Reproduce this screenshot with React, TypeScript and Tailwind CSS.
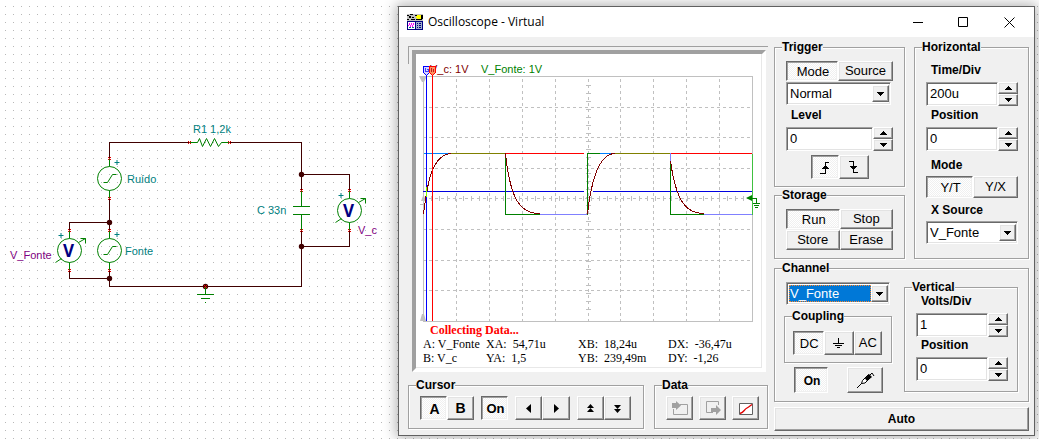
import type { ReactNode } from 'react';

const raised =
  'border border-t-white border-l-white border-r-[#696969] border-b-[#696969] bg-[#f0f0f0] shadow-[inset_-1px_-1px_0_#a0a0a0,inset_1px_1px_0_#e3e3e3]';
const pressed =
  'border border-t-[#696969] border-l-[#696969] border-r-white border-b-white bg-[#f8f8f8] bg-[conic-gradient(#fff_25%,#f0f0f0_0_50%,#fff_0_75%,#f0f0f0_0)] bg-[size:2px_2px] shadow-[inset_1px_1px_0_#a0a0a0,inset_-1px_-1px_0_#f0f0f0]';
const sunken =
  'border border-t-[#a0a0a0] border-l-[#a0a0a0] border-r-white border-b-white bg-white shadow-[inset_1px_1px_0_#696969,inset_-1px_-1px_0_#e3e3e3]';

type BtnProps = { on?: boolean; label?: string; className?: string; disabled?: boolean; children: ReactNode };

function Btn({ on, label, className = '', disabled, children }: BtnProps) {
  return (
    <button
      type="button"
      aria-label={label}
      aria-pressed={on}
      disabled={disabled}
      className={`flex items-center justify-center whitespace-nowrap leading-4 ${on ? pressed + ' pl-0.5 pt-0.5' : raised} ${className}`}
    >
      {children}
    </button>
  );
}

type GroupProps = { title: string; className?: string; body?: string; children: ReactNode };

function Group({ title, className = '', body = '', children }: GroupProps) {
  return (
    <fieldset
      className={`min-w-0 border border-[#a0a0a0] shadow-[1px_1px_0_#fff,inset_1px_1px_0_#fff] ${className}`}
    >
      <legend className="ml-[7px] bg-[#f0f0f0] text-xs font-bold leading-[14px]">{title}</legend>
      <div className={body}>{children}</div>
    </fieldset>
  );
}

function Tri({ up }: { up?: boolean }) {
  return (
    <svg width="7" height="4" viewBox="0 0 7 4" shapeRendering="crispEdges" aria-hidden="true">
      <path d={up ? 'M3 0h1v1h1v1h1v1h1v1H0V3h1V2h1V1h1z' : 'M0 0h7v1H6v1H5v1H4v1H3V3H2V2H1V1H0z'} />
    </svg>
  );
}

function Spin({ id, label, value }: { id: string; label: string; value: string }) {
  return (
    <div>
      <label htmlFor={id} className="ml-[5px] block text-xs font-bold leading-[14px]">
        {label}
      </label>
      <div className="mt-[5px] flex h-6">
        <input
          id={id}
          defaultValue={value}
          className={`w-0 min-w-0 flex-1 px-[3px] text-[13px] leading-5 outline-none ${sunken}`}
        />
        <div className="flex w-5 flex-col">
          <button type="button" aria-label={`${label} up`} className={`flex flex-1 items-center justify-center ${raised}`}>
            <Tri up />
          </button>
          <button type="button" aria-label={`${label} down`} className={`flex flex-1 items-center justify-center ${raised}`}>
            <Tri />
          </button>
        </div>
      </div>
    </div>
  );
}

function Drop({ id, label, value, selected }: { id: string; label: string; value: string; selected?: boolean }) {
  return (
    <div className={`flex h-[23px] py-0.5 pl-0.5 pr-px ${sunken}`}>
      <select
        id={id}
        aria-label={label}
        className={`min-w-0 flex-1 appearance-none rounded-none text-[13px] leading-4 outline-none ${
          selected ? 'border border-dotted border-[#ff8728] bg-[#0078d7] text-white' : 'bg-white pl-px'
        }`}
      >
        <option>{value}</option>
      </select>
      <span className={`pointer-events-none flex w-[17px] items-center justify-center ${raised}`}>
        <Tri />
      </span>
    </div>
  );
}

function Pins({ points }: { points: [number, number][] }) {
  return (
    <g stroke="#e00000" strokeWidth="1">
      {points.map(([x, y]) => (
        <path key={`${x}-${y}`} d={`M${x - 1} ${y - 1}l3 3M${x + 2} ${y - 1}l-3 3`} />
      ))}
    </g>
  );
}

function Source({ x, y }: { x: number; y: number }) {
  return (
    <g fill="none" stroke="#008000" strokeWidth="1">
      <circle cx={x} cy={y} r="12" />
      <path d={`M${x} ${y - 20}v8M${x} ${y + 12}v8`} />
      <path d={`M${x - 6} ${y + 4}h4l5 -8h4`} />
      <path stroke="#008080" d={`M${x + 5} ${y - 16}h5M${x + 7.5} ${y - 18.5}v5`} />
    </g>
  );
}

function Meter({ x, y }: { x: number; y: number }) {
  return (
    <g fill="none" stroke="#008000" strokeWidth="1">
      <circle cx={x} cy={y} r="12" fill="#fff" />
      <path d={`M${x} ${y - 20}v8M${x} ${y + 12}v8`} />
      <path d={`M${x - 8} ${y + 8}l-6 4M${x + 9} ${y - 8}l7 -4M${x + 11} ${y - 12}h5v5`} />
      <path stroke="#008080" d={`M${x - 11} ${y - 15}h5M${x - 8.5} ${y - 17.5}v5`} />
      <text
        x={x - 1}
        y={y + 6}
        textAnchor="middle"
        fill="#000080"
        stroke="none"
        className="font-['Open_Sans',sans-serif] text-[17px] font-bold"
      >
        V
      </text>
    </g>
  );
}

function Schematic() {
  return (
    <svg viewBox="0 0 398 320" className="block w-full" role="img" aria-label="RC circuit">
      <g fill="none" stroke="#400000" strokeWidth="1" shapeRendering="crispEdges">
        <path d="M109.500 158.500V142.500H189.500M229.500 142.500H301.500V190.500M301.500 174.500H349.500V190.500M301.500 230.500V286.500H109.500V270.500M349.500 230.500V246.500H301.500M109.500 198.500V230.500M109.500 222.500H69.500V230.500M69.500 270.500V278.500H109.500" />
      </g>
      <g fill="#400000">
        <circle cx="109.500" cy="222.500" r="2.700" />
        <circle cx="109.500" cy="278.500" r="2.700" />
        <circle cx="301.500" cy="174.500" r="2.700" />
        <circle cx="301.500" cy="246.500" r="2.700" />
        <circle cx="205.500" cy="286.500" r="2.700" />
      </g>
      <g fill="none" stroke="#008000" strokeWidth="1">
        <path d="M189.500 142.500h8l2 -4 3 8 4 -8 4 8 4 -8 4 8 3 -4h8" />
        <path shapeRendering="crispEdges" d="M301.500 190.500v16M293 206.500h17M293 214.500h17M301.500 214.500v16" />
        <path shapeRendering="crispEdges" d="M205.500 286.500v8M197 294.500h17M201 298.500h9M205 302.500h1" />
      </g>
      <Source x={109.5} y={178.5} />
      <Source x={109.5} y={250.5} />
      <Meter x={69.5} y={250.5} />
      <Meter x={349.5} y={210.5} />
      <Pins
        points={[
          [189, 142], [229, 142], [109, 158], [109, 198], [109, 230], [109, 270],
          [69, 230], [69, 270], [301, 190], [301, 230], [349, 190], [349, 230], [205, 286],
        ]}
      />
      <g className="font-['Liberation_Sans',Arial,sans-serif] text-[11px]" fill="#008080">
        <text x="193" y="133">R1 1,2k</text>
        <text x="127" y="183">Ruído</text>
        <text x="125" y="255">Fonte</text>
        <text x="257" y="214">C 33n</text>
        <text x="10" y="259" fill="#800080">V_Fonte</text>
        <text x="358" y="234" fill="#800080">V_c</text>
      </g>
    </svg>
  );
}

const gridX = [40, 73, 106, 139, 172, 204, 237, 270, 303];
const gridY = [53, 83, 114, 144, 175, 206, 236];

function Screen() {
  const ticksX: string[] = [];
  for (let x = 15; x < 334; x += 8) ticksX.push(`M${x}.5 142v5`);
  const ticksY: string[] = [];
  for (let y = 31; y < 262; y += 8) ticksY.push(`M170 ${y}.5h5`);
  return (
    <svg viewBox="0 0 345 270" className="block w-full" role="img" aria-label="Voltage traces">
      <g className="font-['Liberation_Sans',Arial,sans-serif] text-[11px]">
        <text x="14" y="19" fill="#800000">V_c: 1V</text>
        <text x="65" y="19" fill="#008000">V_Fonte: 1V</text>
      </g>
      <g fill="none" stroke="#c0c0c0" shapeRendering="crispEdges">
        <path strokeDasharray="3 3" d={gridX.map((x) => `M${x}.5 25V267`).join('')} />
        <path strokeDasharray="3 3" d={gridY.map((y) => `M7 ${y}.5H336`).join('')} />
        <path d={ticksX.join('') + ticksY.join('')} />
        <path d="M7.500 22.500H336.500V267.500H7.500zM4 150.500h4" />
      </g>
      <path fill="#c0c0c0" d="M3 22h8l-3 6h-2zM4 267h6l-2-7h-2zM5 147h5l-2-5h-1z" />
      <g shapeRendering="crispEdges">
        <path fill="#0000e0" d="M7 137h161v1H7zM177 137h159v1H177z" />
        <path fill="#ff0000" d="M89 99h79v1H89zM254 99h82v1h-82z" />
        <path fill="#0080ff" d="M8 99h27v1H8zM184 99h16v1h-16z" />
        <path fill="#808000" d="M35 99h54v1H35zM199 99h55v1h-55z" />
        <path fill="#8080ff" d="M124 160h47v1h-47zM288 160h48v1h-48zM254 99h1v8h-1z" />
        <path fill="#008000" d="M89 100h1v61h-1zM89 160h35v1H89zM171 99h1v62h-1zM171 99h13v1h-13zM254 107h1v54h-1zM254 160h34v1h-34z" />
        <path fill="#40c040" d="M336 100h1v61h-1z" />
        <g fill="none" stroke="#800000">
          <path d="M7.500 160C11 132 15 101 35 99.500" />
          <path d="M89.500 99.500C94 143 103 160 124 159.500" />
          <path d="M171.500 160C176 120 185 99.500 199 99.500" />
          <path d="M254.500 107C260 147 270 160 288 159.500" />
        </g>
        <rect x="10" y="20" width="1" height="247" fill="#0000ff" />
        <rect x="16" y="20" width="1" height="247" fill="#ff0000" />
        <rect x="10" y="133" width="1" height="10" fill="#80ff00" />
        <path stroke="#0000ff" d="M7.500 12.500h6v6l-3 3-3-3z" fill="#d8d8ff" />
        <path stroke="#ff0000" d="M13.500 12.500h6v6l-3 3-3-3z" fill="#ff9060" />
        <path fill="none" stroke="#4040ff" d="M9.500 14v4M11 15.500h1.500v2H10" />
        <path fill="none" stroke="#c02020" d="M15.500 14v4M17.500 15v3" />
      </g>
      <path fill="#008000" d="M330 144l6-3v6z" />
      <path fill="none" stroke="#008000" shapeRendering="crispEdges" d="M336 144.500h4.500v5M337 149.500h7M338 151.500h5M339 153.500h3" />
    </svg>
  );
}

function Glyph({ d, w = 12, h = 12 }: { d: string; w?: number; h?: number }) {
  return (
    <svg width={w} height={h} viewBox={`0 0 ${w} ${h}`} aria-hidden="true">
      <path d={d} />
    </svg>
  );
}

function TitleBar() {
  return (
    <header className="flex h-[30px] items-center bg-white pl-2 pr-0.5">
      <svg width="16" height="16" viewBox="0 0 16 16" shapeRendering="crispEdges" aria-hidden="true">
        <path fill="#c0c0c0" d="M0 0h16v7H0z" />
        <path fill="#000" d="M0 1h2v1H0zM3 0h3v1H3zM2 2h2v2H2zM5 3h2v1H5zM0 5h2v1H0zM4 5h4v1H4zM8 1h2v1H8zM9 5h6v1H9zM14 1h2v4h-2z" />
        <path fill="#ff0" d="M10 1h4v4h-4zM9 2h1v2H9z" />
        <path fill="#fff" d="M0 7h8v8H0z" />
        <path fill="#000080" d="M0 7h16v1H0zM0 15h16v1H0zM0 7h1v9H0zM8 7h1v9H8zM15 7h1v9h-1z" />
        <path fill="#ff00ff" d="M1 11h1v1H1zM2 9h1v2H2zM3 11h1v2H3zM4 9h1v2H4zM5 11h1v2H5zM6 9h1v2H6z" />
        <path fill="#008080" d="M2 13h2v1H2zM5 13h2v1H5z" />
        <path fill="#a0b0c8" d="M9 8h6v7H9z" />
        <path fill="#000080" d="M10 9h1v1h-1zM10 11h1v1h-1zM10 13h1v1h-1zM12 9h2v1h-2zM12 11h2v1h-2zM12 13h2v1h-2z" />
      </svg>
      <h1 className="ml-[5px] flex-1 font-['Open_Sans','Segoe_UI',sans-serif] text-xs leading-4">Oscilloscope - Virtual</h1>
      <button type="button" aria-label="Minimize" className="flex h-full w-[45px] items-center justify-center">
        <svg width="11" height="11" viewBox="0 0 11 11"><path d="M0 5.500h10" stroke="#000" /></svg>
      </button>
      <button type="button" aria-label="Maximize" className="flex h-full w-[45px] items-center justify-center">
        <svg width="11" height="11" viewBox="0 0 11 11"><path d="M.5.5h9v9h-9z" fill="none" stroke="#000" /></svg>
      </button>
      <button type="button" aria-label="Close" className="flex h-full w-[46px] items-center justify-center">
        <svg width="11" height="11" viewBox="0 0 11 11"><path d="M.5.5l10 10M10.500.5l-10 10" stroke="#000" /></svg>
      </button>
    </header>
  );
}

const readings = [
  ['A: V_Fonte', 'XA:  54,71u', 'XB:  18,24u', 'DX:  -36,47u'],
  ['B: V_c', 'YA:  1,5', 'YB:  239,49m', 'DY:  -1,26'],
];

function ScopePanel() {
  return (
    <div className="border-t border-[#a0a0a0] bg-[linear-gradient(#a0a0a0,#a0a0a0)] bg-[size:1px_17px] bg-no-repeat pl-1 pr-0.5 pt-[3px]">
      <div className="border-4 border-b-white border-l-[#a0a0a0] border-r-white border-t-[#a0a0a0] bg-white">
        <div className="border-b border-r border-[#e8e8e8] pb-0.5">
          <Screen />
          <div className="font-['Liberation_Serif','Times_New_Roman',serif] text-xs leading-[14px]">
            <p className="pl-3.5 font-bold leading-[13px] text-[#ff0000]">Collecting Data...</p>
            {readings.map((row) => (
              <div key={row[0]} className="grid grid-cols-[63fr_92fr_90fr_93fr] whitespace-pre pl-[7px]">
                {row.map((cell) => (
                  <span key={cell}>{cell}</span>
                ))}
              </div>
            ))}
          </div>
        </div>
      </div>
    </div>
  );
}

function LowerBar() {
  return (
    <div className="mt-1.5 flex gap-2.5">
      <Group title="Cursor" className="w-[236px]" body="pb-2 pl-[11px]">
        <div className="mt-1 flex h-6 gap-[7px] text-[13px]">
          <div className="flex">
            <Btn on className="w-[27px] text-sm font-bold">A</Btn>
            <Btn className="w-[27px] text-sm font-bold">B</Btn>
          </div>
          <Btn on className="w-[27px] font-bold">On</Btn>
          <div className="flex">
            <Btn label="Cursor left" className="w-[27px]"><Glyph w={5} h={9} d="M5 0v9L0 4.500z" /></Btn>
            <Btn label="Cursor right" className="w-[28px]"><Glyph w={5} h={9} d="M0 0v9l5-4.500z" /></Btn>
          </div>
          <div className="flex">
            <Btn label="Next peak" className="w-[27px]"><Glyph w={7} h={9} d="M3.500 0L7 4H0zM3.500 4L7 8H0z" /></Btn>
            <Btn label="Previous peak" className="w-[27px]"><Glyph w={7} h={9} d="M0 1h7L3.500 5zM0 5h7L3.500 9z" /></Btn>
          </div>
        </div>
      </Group>
      <Group title="Data" className="flex-1" body="pb-2 pl-[11px]">
        <div className="mt-1 flex h-6 gap-1.5">
          <Btn disabled label="Import" className="w-[27px]">
            <svg width="18" height="16" viewBox="0 0 18 16">
              <path fill="none" stroke="#a0a0a0" d="M9 4.500h7.500v10h-14V9" />
              <path fill="#a0a0a0" d="M1 3h4V1l5 4.500-5 4.500V8H1z" />
            </svg>
          </Btn>
          <Btn disabled label="Export" className="w-[27px]">
            <svg width="18" height="16" viewBox="0 0 18 16">
              <path fill="none" stroke="#a0a0a0" d="M9 12.500H2.500v-11h12V5" />
              <path fill="#a0a0a0" d="M7 8h5V5l5 5-5 5v-3H7z" />
            </svg>
          </Btn>
          <Btn label="Curve" className="w-[27px]">
            <svg width="14" height="13" viewBox="0 0 14 13">
              <path fill="#fff" stroke="#606060" d="M.5 1.500h13v11H.5z" />
              <path fill="none" stroke="#e00000" strokeWidth="1.300" d="M1 11.500c4-1 4-4 7-5.500 2-1 3-2 5-3.500" />
            </svg>
          </Btn>
        </div>
      </Group>
    </div>
  );
}

function Controls() {
  return (
    <div className="w-[255px] shrink-0 text-[13px]">
      <div className="flex gap-[9px]">
        <div className="flex w-[131px] flex-col gap-px">
          <Group title="Trigger" body="px-[11px] pb-[7px]">
            <div className="mt-[7px] flex h-5">
              <Btn on className="w-[52px]">Mode</Btn>
              <Btn className="flex-1">Source</Btn>
            </div>
            <div className="mt-px pr-0.5">
              <Drop id="trigger-mode" label="Trigger mode" value="Normal" />
            </div>
            <div className="mt-[3px]">
              <Spin id="level" label="Level" value="0" />
            </div>
            <div className="mt-1 flex h-6 justify-center">
              <Btn on label="Rising edge" className="w-7">
                <svg width="11" height="12" viewBox="0 0 11 12" shapeRendering="crispEdges">
                  <path fill="none" stroke="#000" d="M0 11.500h5.500v-11H9" />
                  <path d="M5 3h1v1h1v1h1v1h1v1H2V6h1V5h1V4h1z" />
                </svg>
              </Btn>
              <Btn label="Falling edge" className="w-[30px]">
                <svg width="11" height="12" viewBox="0 0 11 12" shapeRendering="crispEdges">
                  <path fill="none" stroke="#000" d="M1 .5h4.500v11H10" />
                  <path d="M2 5h7v1H8v1H7v1H6v1H5V8H4V7H3V6H2z" />
                </svg>
              </Btn>
            </div>
          </Group>
          <Group title="Storage" body="px-[11px] pb-2">
            <div className="mt-[7px] grid h-[41px] grid-cols-2 grid-rows-2 gap-y-px">
              <Btn on>Run</Btn>
              <Btn>Stop</Btn>
              <Btn>Store</Btn>
              <Btn>Erase</Btn>
            </div>
          </Group>
        </div>
        <Group title="Horizontal" className="flex-1" body="pl-[11px] pr-2.5">
          <div className="mt-[9px] flex flex-col gap-0.5">
            <Spin id="time-div" label="Time/Div" value="200u" />
            <Spin id="h-position" label="Position" value="0" />
          </div>
          <p className="ml-[5px] mt-[7px] text-xs font-bold leading-[14px]">Mode</p>
          <div className="mt-1 flex h-[22px]">
            <Btn on className="flex-1">Y/T</Btn>
            <Btn className="flex-1">Y/X</Btn>
          </div>
          <label htmlFor="x-source" className="mb-1 ml-[5px] mt-[5px] block text-xs font-bold leading-[14px]">X Source</label>
          <Drop id="x-source" label="X Source" value="V_Fonte" />
        </Group>
      </div>
      <Group title="Channel" className="mt-0.5" body="flex gap-3 pb-2 pl-[9px] pr-2.5">
        <div className="w-[108px]">
          <div className="mt-[7px] px-0.5">
            <Drop id="channel" label="Channel" value="V_Fonte" selected />
          </div>
          <Group title="Coupling" className="mt-1" body="pb-[7px] pl-2 pr-[9px] pt-2">
            <div className="flex h-6">
              <Btn on className="flex-1">DC</Btn>
              <Btn label="Ground" className="w-[30px]">
                <svg width="11" height="10" viewBox="0 0 11 10" shapeRendering="crispEdges">
                  <path fill="none" stroke="#000" d="M5.500 0v5M0 5.500h11M2 7.500h7M4 9.500h3" />
                </svg>
              </Btn>
              <Btn className="flex-1">AC</Btn>
            </div>
          </Group>
          <div className="mt-1 flex h-[26px] justify-between pl-2.5 pr-[9px]">
            <Btn on className="w-[34px] text-xs font-bold">On</Btn>
            <Btn label="Probe" className="w-9">
              <svg width="19" height="17" viewBox="0 0 19 17">
                <path fill="none" stroke="#000" d="M1 16l5-5M14 3l2-2 2 3" />
                <path fill="#fff" stroke="#000" d="M5.500 11.500l1-3 6-6 2.500 2.500-6 6z" />
                <path d="M9 6.500l4-4.500 3 3-5 4z" />
              </svg>
            </Btn>
          </div>
        </div>
        <Group title="Vertical" className="mt-[5px] flex-1 self-start" body="flex flex-col gap-px pb-2.5 pl-[11px] pr-[9px]">
          <Spin id="volts-div" label="Volts/Div" value="1" />
          <Spin id="v-position" label="Position" value="0" />
        </Group>
      </Group>
      <Btn className="mt-[5px] h-6 w-full text-xs font-bold">Auto</Btn>
    </div>
  );
}

export default function App() {
  return (
    <div className="grid min-h-screen grid-cols-[398fr_637fr] items-start bg-white bg-[radial-gradient(circle_at_5.5px_6.5px,#b8b8b8_0.6px,transparent_0.7px)] bg-[size:8px_8px] pr-1 font-['Liberation_Sans',Arial,sans-serif] text-black">
      <main className="min-w-0">
        <Schematic />
      </main>
      <section
        aria-label="Oscilloscope"
        className="mt-1.5 min-w-0 border border-[#606060] bg-[#f0f0f0] shadow-[0_0_12px_2px_rgba(0,0,0,0.3)]"
      >
        <TitleBar />
        <div className="flex gap-1.5 pb-1 pl-[9px] pr-[5px]">
          <div className="min-w-0 flex-1 pt-[9px]">
            <ScopePanel />
            <LowerBar />
          </div>
          <div className="pt-[3px]">
            <Controls />
          </div>
        </div>
      </section>
    </div>
  );
}
